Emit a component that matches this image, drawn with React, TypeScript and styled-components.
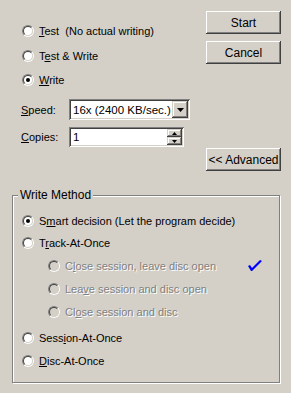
import React from "react";
import styled, { createGlobalStyle } from "styled-components";

const Global = createGlobalStyle`
  html, body { margin: 0; padding: 0; background: #D4D0C8; }
  body { font-family: "Liberation Sans", Arial, sans-serif; font-size: 11px; }
`;

const Window = styled.div`
  width: 291px;
  height: 393px;
  background: #D4D0C8;
  color: #000;
  font-family: "Liberation Sans", Arial, sans-serif;
  font-size: 11px;
  overflow: hidden;
  display: flex;
  flex-direction: column;
`;

const Top = styled.div`
  display: flex;
  height: 171px;
`;

const LeftCol = styled.div`
  display: flex;
  flex-direction: column;
  padding: 18px 0 0 20px;
`;

const RightCol = styled.div`
  margin-left: auto;
  padding: 11px 10px 0 0;
  display: flex;
  flex-direction: column;
`;

const RadioRow = styled.label<{ $h?: number; $indent?: number; $mt?: number; $disabled?: boolean }>`
  display: flex;
  align-items: center;
  height: ${(p) => p.$h ?? 24}px;
  margin-top: ${(p) => p.$mt ?? 0}px;
  padding-left: ${(p) => p.$indent ?? 2}px;
  color: ${(p) => (p.$disabled ? "#808080" : "#000")};
  text-shadow: ${(p) => (p.$disabled ? "1px 1px 0 #fff" : "none")};
  white-space: pre;
`;

const RadioOuter = styled.span`
  width: 12px;
  height: 12px;
  box-sizing: border-box;
  border-radius: 50%;
  border: 1px solid;
  border-color: #808080 #ffffff #ffffff #808080;
  display: flex;
  align-items: center;
  justify-content: center;
  flex: none;
`;

const RadioInner = styled.span<{ $disabled?: boolean }>`
  width: 10px;
  height: 10px;
  box-sizing: border-box;
  border-radius: 50%;
  border: 1px solid;
  border-color: #404040 #d4d0c8 #d4d0c8 #404040;
  background: ${(p) => (p.$disabled ? "#D4D0C8" : "#fff")};
  display: flex;
  align-items: center;
  justify-content: center;
`;

const Dot = styled.span`
  width: 4px;
  height: 4px;
  border-radius: 50%;
  background: #000;
`;

const RadioText = styled.span`
  margin-left: 5px;
`;

const U = styled.span`
  text-decoration: underline;
  text-underline-offset: 1px;
`;

const FieldRow = styled.div<{ $mt: number; $h: number }>`
  display: flex;
  align-items: center;
  margin-top: ${(p) => p.$mt}px;
  height: ${(p) => p.$h}px;
`;

const FieldLabel = styled.span`
  width: 49px;
  padding-left: 1px;
  box-sizing: border-box;
`;

const Sunken = styled.div<{ $w: number }>`
  width: ${(p) => p.$w}px;
  height: 100%;
  box-sizing: border-box;
  background: #fff;
  box-shadow: inset 1px 1px #808080, inset -1px -1px #ffffff,
    inset 2px 2px #404040, inset -2px -2px #d4d0c8;
  padding: 2px;
  display: flex;
  align-items: center;
`;

const FieldText = styled.span`
  flex: 1;
  padding-left: 2px;
  font-size: 11.5px;
  white-space: nowrap;
  overflow: hidden;
`;

const DropBtn = styled.span`
  width: 16px;
  height: 17px;
  box-sizing: border-box;
  background: #d4d0c8;
  box-shadow: inset -1px -1px #404040, inset 1px 1px #d4d0c8,
    inset -2px -2px #808080, inset 2px 2px #ffffff;
  display: flex;
  align-items: center;
  justify-content: center;
  flex: none;
`;

const SpinCol = styled.span`
  display: flex;
  flex-direction: column;
  width: 15px;
  height: 16px;
  flex: none;
`;

const SpinBtn = styled.span`
  flex: 1;
  background: #d4d0c8;
  box-shadow: inset -1px -1px #404040, inset 1px 1px #d4d0c8,
    inset -2px -2px #808080, inset 2px 2px #ffffff;
  display: flex;
  align-items: center;
  justify-content: center;
`;

const Button = styled.button<{ $mt?: number }>`
  width: 75px;
  height: 23px;
  margin-top: ${(p) => p.$mt ?? 0}px;
  box-sizing: border-box;
  border: none;
  padding: 0;
  background: #d4d0c8;
  color: #000;
  font-family: "Liberation Sans", Arial, sans-serif;
  font-size: 12px;
  box-shadow: inset -1px -1px #404040, inset 1px 1px #ffffff,
    inset -2px -2px #808080, inset 2px 2px #d4d0c8;
`;

const Group = styled.fieldset`
  margin: 18px 0 0 12px;
  width: 268px;
  height: 194px;
  box-sizing: border-box;
  padding: 0;
  border: 1px solid #808080;
  box-shadow: inset 1px 1px #fff, 1px 1px #fff;
  min-width: 0;
`;

const Legend = styled.legend`
  margin-left: 5px;
  padding: 0 2px;
  line-height: 13px;
  font-size: 12px;
  background: #d4d0c8;
`;

const GroupBody = styled.div`
  padding: 8px 0 0 7px;
  display: flex;
  flex-direction: column;
`;

const Check = styled.svg`
  margin-left: auto;
  margin-right: 17px;
  flex: none;
`;

const Tri = ({ w, h }: { w: number; h: number }) => (
  <svg width={w} height={h} viewBox={`0 0 ${w} ${h}`}>
    <polygon points={`0,0 ${w},0 ${w / 2},${h}`} fill="#000" />
  </svg>
);

const TriUp = ({ w, h }: { w: number; h: number }) => (
  <svg width={w} height={h} viewBox={`0 0 ${w} ${h}`}>
    <polygon points={`0,${h} ${w},${h} ${w / 2},0`} fill="#000" />
  </svg>
);

type RadioProps = {
  checked?: boolean;
  disabled?: boolean;
  h?: number;
  mt?: number;
  indent?: number;
  children: React.ReactNode;
  extra?: React.ReactNode;
};

const Radio = ({ checked, disabled, h, mt, indent, children, extra }: RadioProps) => (
  <RadioRow $h={h} $mt={mt} $indent={indent} $disabled={disabled}>
    <RadioOuter>
      <RadioInner $disabled={disabled}>{checked && <Dot />}</RadioInner>
    </RadioOuter>
    <RadioText>{children}</RadioText>
    {extra}
  </RadioRow>
);

export default function App() {
  return (
    <>
      <Global />
      <Window>
        <Top>
          <LeftCol>
            <Radio h={25}>
              <U>T</U>est  (No actual writing)
            </Radio>
            <Radio h={25}>
              T<U>e</U>st &amp; Write
            </Radio>
            <Radio checked h={24}>
              <U>W</U>rite
            </Radio>
            <FieldRow $mt={7} $h={21}>
              <FieldLabel>
                <U>S</U>peed:
              </FieldLabel>
              <Sunken $w={121}>
                <FieldText>16x (2400 KB/sec.)</FieldText>
                <DropBtn>
                  <Tri w={7} h={4} />
                </DropBtn>
              </Sunken>
            </FieldRow>
            <FieldRow $mt={7} $h={20}>
              <FieldLabel>
                <U>C</U>opies:
              </FieldLabel>
              <Sunken $w={115}>
                <FieldText>1</FieldText>
                <SpinCol>
                  <SpinBtn>
                    <TriUp w={5} h={3} />
                  </SpinBtn>
                  <SpinBtn>
                    <Tri w={5} h={3} />
                  </SpinBtn>
                </SpinCol>
              </Sunken>
            </FieldRow>
          </LeftCol>
          <RightCol>
            <Button>Start</Button>
            <Button $mt={7}>Cancel</Button>
            <Button $mt={84}>&lt;&lt; Advanced</Button>
          </RightCol>
        </Top>
        <Group>
          <Legend>Write Method</Legend>
          <GroupBody>
            <Radio checked h={22}>
              S<U>m</U>art decision (Let the program decide)
            </Radio>
            <Radio h={22}>
              T<U>r</U>ack-At-Once
            </Radio>
            <Radio
              disabled
              h={23}
              indent={28}
              extra={
                <Check width="14" height="12" viewBox="0 0 14 12">
                  <polygon
                    points="0,6 2,5 4,8 12,0 14,1 4,11 3,11"
                    fill="#0000FF"
                  />
                </Check>
              }
            >
              C<U>l</U>ose session, leave disc open
            </Radio>
            <Radio disabled h={23} indent={28}>
              Lea<U>v</U>e session and disc open
            </Radio>
            <Radio disabled h={23} indent={28}>
              Cl<U>o</U>se session and disc
            </Radio>
            <Radio h={22} mt={4}>
              Sess<U>i</U>on-At-Once
            </Radio>
            <Radio h={23}>
              <U>D</U>isc-At-Once
            </Radio>
          </GroupBody>
        </Group>
      </Window>
    </>
  );
}
